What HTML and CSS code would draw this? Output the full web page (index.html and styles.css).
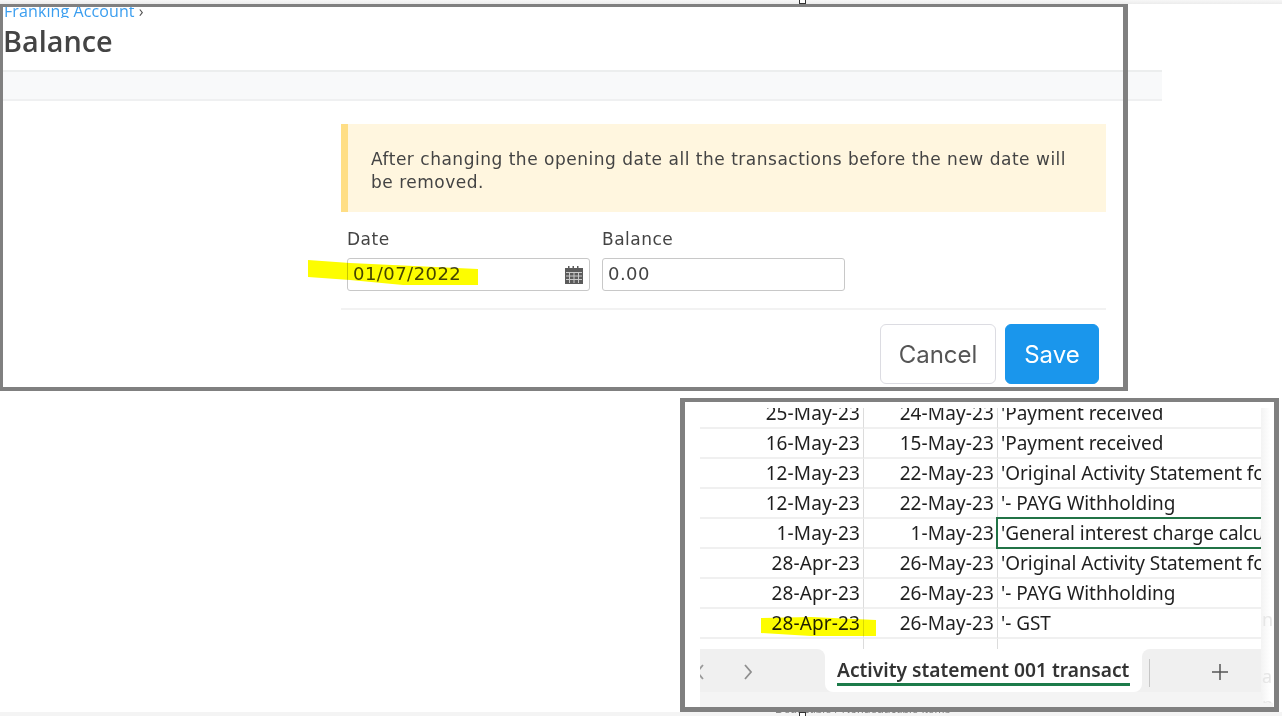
FILE: index.html
```html
<!DOCTYPE html>
<html lang="en">
<head>
<meta charset="utf-8">
<title>Balance</title>
<link rel="stylesheet" href="styles.css">
</head>
<body>
<div class="top-strip"></div>
<div class="marker marker-top"></div>
<div class="bottom-strip"><span class="bottom-dots">···</span><span class="bottom-text">Deductible / Nondeductible items</span></div>
<div class="marker marker-bottom"></div>

<section class="window window-form">
  <div class="crumb"><a class="crumb-link">Franking Account</a> ›</div>
  <h1 class="title">Balance</h1>
  <div class="band"></div>
  <div class="form">
    <div class="alert">After changing the opening date all the transactions before the new date will be removed.</div>
    <div class="fields">
      <div class="field">
        <label class="label">Date</label>
        <div class="input">
          <span>01/07/2022</span>
          <svg class="cal" width="18" height="19" viewBox="0 0 18 19" aria-hidden="true">
            <path fill="#5b5b5b" d="M0 3h3V1h1.500v2h3V1h1.500v2h3V1h1.500v2H18v16H0z"/>
            <path stroke="#c9c9c9" stroke-width="1" fill="none" d="M1 7.500h16M1 11h16M1 14.500h16M4.500 7v11M9 7v11M13.500 7v11"/>
          </svg>
        </div>
      </div>
      <div class="field">
        <label class="label">Balance</label>
        <div class="input"><span>0.00</span></div>
      </div>
    </div>
    <div class="actions">
      <button class="btn btn-cancel">Cancel</button>
      <button class="btn btn-save">Save</button>
    </div>
  </div>
</section>

<svg class="highlight highlight-date" width="172" height="28" viewBox="0 0 172 28" aria-hidden="true">
  <polygon fill="#fdfd00" points="0,0 42,3 170,9 170,25 95,25 42,20 0,17"/>
</svg>

<section class="window window-sheet">
  <div class="sheet">
    <div class="grid">
      <div class="cell num">25-May-23</div><div class="cell num">24-May-23</div><div class="cell txt">'Payment received</div>
      <div class="cell num">16-May-23</div><div class="cell num">15-May-23</div><div class="cell txt">'Payment received</div>
      <div class="cell num">12-May-23</div><div class="cell num">22-May-23</div><div class="cell txt">'Original Activity Statement for the period</div>
      <div class="cell num">12-May-23</div><div class="cell num">22-May-23</div><div class="cell txt">'- PAYG Withholding</div>
      <div class="cell num">1-May-23</div><div class="cell num">1-May-23</div><div class="cell txt selected">'General interest charge calculation</div>
      <div class="cell num">28-Apr-23</div><div class="cell num">26-May-23</div><div class="cell txt">'Original Activity Statement for the period</div>
      <div class="cell num">28-Apr-23</div><div class="cell num">26-May-23</div><div class="cell txt">'- PAYG Withholding</div>
      <div class="cell num">28-Apr-23</div><div class="cell num">26-May-23</div><div class="cell txt">'- GST</div>
      <div class="cell empty"></div><div class="cell empty"></div><div class="cell empty"></div>
    </div>
  </div>
  <div class="tabbar">
    <div class="tab-side tab-side-left">
      <svg class="chev chev-left" width="10" height="18" viewBox="0 0 10 18" aria-hidden="true"><path d="M8 2 2 9l6 7" fill="none" stroke="#9a9a9a" stroke-width="1.800"/></svg>
      <svg class="chev chev-right" width="10" height="18" viewBox="0 0 10 18" aria-hidden="true"><path d="M2 2l6 7-6 7" fill="none" stroke="#8f8f8f" stroke-width="1.800"/></svg>
    </div>
    <div class="tab-slot"><div class="tab"><span class="tab-label">Activity statement 001 transact</span></div></div>
    <div class="tab-side tab-side-right">
      <span class="tab-divider"></span>
      <svg class="plus" width="18" height="18" viewBox="0 0 18 18" aria-hidden="true"><path d="M9 1v16M1 9h16" stroke="#555" stroke-width="1.500" fill="none"/></svg>
    </div>
  </div>
  <div class="statusbar"></div>
  <div class="edge">
    <span class="ghost ghost-a">nt</span>
    <span class="ghost ghost-b">a</span>
    <span class="ghost ghost-c">nt</span>
  </div>
</section>

<svg class="highlight highlight-apr" width="116" height="20" viewBox="0 0 116 20" aria-hidden="true">
  <polygon fill="#fdfd00" points="0,1 50,0 115,3 115,19 50,19 0,16"/>
</svg>
</body>
</html>
```
FILE: styles.css
```css
* { box-sizing: border-box; }
html, body { margin: 0; padding: 0; }
body {
  position: relative;
  width: 1282px;
  height: 716px;
  overflow: hidden;
  background: #fff;
}
.top-strip {
  position: absolute; left: 0; top: 0; width: 1282px; height: 4px;
  background: linear-gradient(#f7f7f7, #ececec);
}
.bottom-strip {
  position: absolute; left: 0; top: 712px; width: 1282px; height: 4px;
  background: #f4f4f4; overflow: hidden;
}
.bottom-text, .bottom-dots {
  position: absolute; top: -10px;
  font: 12px "Liberation Sans", sans-serif; color: #888;
}
.bottom-text { left: 775px; }
.bottom-dots { left: 703px; letter-spacing: 2px; }
.marker {
  position: absolute; left: 799px; width: 7px; height: 5px;
  border: 1px solid #333; background: #fff;
}
.marker-top { top: -1px; }
.marker-bottom { top: 712px; }

.window { position: absolute; border-style: solid; border-color: #808080; }

/* Form window */
.window-form {
  left: 0; top: 4px; width: 1128px; height: 387px;
  border-width: 3px 5px 4px 3px;
  font-family: "DejaVu Sans", sans-serif;
}
.crumb {
  height: 11px; padding-left: 1px; overflow: hidden;
  font: 16px/9px "Open Sans", sans-serif; color: #555;
  letter-spacing: .1px;
}
.crumb-link { color: #3b9eef; }
.title {
  margin: 5px 0 0; height: 47px;
  font: 600 28.800px/36px "Open Sans", sans-serif; color: #444;
}
.band {
  position: relative; z-index: -1;
  width: 1159px; height: 31px;
  background: #f8f9fa;
  border-top: 2px solid #eceeee;
  border-bottom: 2px solid #eff0f1;
}
.form { width: 765px; margin: 23px 0 0 338px; }
.alert {
  height: 88px; padding: 24px 30px 0 23px;
  background: #fff6df; border-left: 7px solid #ffde85;
  font-size: 17px; line-height: 23px; color: #444;
  letter-spacing: .51px;
}
.fields { display: flex; gap: 12px; padding: 15px 0 0 6px; }
.field { width: 243px; }
.label { display: block; height: 31px; font-size: 17px; line-height: 24px; color: #444; letter-spacing: .5px; }
.input {
  display: flex; align-items: center; justify-content: space-between;
  height: 33px; padding: 0 6px 2px 5px;
  border: 1px solid #c8c8c8; border-radius: 3px;
  font-size: 18px; color: #444; letter-spacing: .45px;
}
.cal { flex: none; margin-top: 2px; }
.actions {
  display: flex; justify-content: flex-end; gap: 9px;
  margin-top: 17px; padding: 14px 7px 0 0;
  border-top: 2px solid #f2f2f2;
}
.btn { height: 60px; border-radius: 6px; font: 24px Inter, sans-serif; }
.btn-cancel { width: 116px; background: #fff; border: 1px solid #dcdce2; color: #555; }
.btn-save { width: 94px; background: #1a96ec; border: 1px solid #1a96ec; color: #fff; }

.highlight { position: absolute; mix-blend-mode: multiply; }
.highlight-date { left: 308px; top: 260px; }
.highlight-apr { left: 761px; top: 617px; }

/* Spreadsheet window */
.window-sheet {
  left: 680px; top: 398px; width: 599px; height: 314px;
  border-width: 4px 5px 5px 5px;
  font-family: "Noto Sans", sans-serif;
}
.sheet { margin: 6px 0 0 15px; width: 561px; height: 241px; overflow: hidden; }
.grid {
  display: grid; grid-template-columns: 164px 134px 263px;
  grid-auto-rows: 30px; margin-top: -9px;
}
.cell {
  white-space: nowrap; overflow: hidden;
  font-size: 19px; line-height: 28px; color: #1f1f1f;
  border-right: 1px solid #dcdcdc; border-bottom: 2px solid #f0f0f0;
}
.num { text-align: right; padding-right: 3px; letter-spacing: .12px; }
.txt { padding-left: 3px; border-right: 0; letter-spacing: -.05px; }
.selected {
  position: relative; height: 32px; margin: -2px -3px 0 -2px; padding-left: 5px;
  line-height: 32px; border: 0; box-shadow: inset 0 0 0 2px #217346;
}
.empty { border-bottom: 0; }
.empty:last-child { border-right: 0; }

.tabbar {
  display: flex; margin-left: 15px; width: 561px; height: 43px; overflow: hidden;
}
.tab-side { position: relative; background: #f0f0f0; }
.tab-side-left { width: 125px; border-radius: 0 8px 0 0; }
.tab-side-right { flex: 1; border-radius: 8px 0 0 0; }
.chev { position: absolute; top: 14px; }
.chev-left { left: -5px; }
.chev-right { left: 43px; }
.tab-slot { width: 317px; background: #f0f0f0; }
.tab {
  height: 43px; padding: 9px 12px 0;
  background: #fff; border-radius: 0 0 8px 8px;
}
.tab-label {
  display: block; height: 28px; white-space: nowrap; overflow: hidden;
  font-size: 19.200px; font-weight: 600; line-height: 24px; color: #333;
  border-bottom: 3px solid #1d7b4a;
}
.tab-divider { position: absolute; left: 7px; top: 10px; width: 1px; height: 28px; background: #c6c6c6; }
.plus { position: absolute; left: 69px; top: 14px; }
.statusbar { margin-left: 15px; width: 573px; height: 15px; background: #f4f4f4; }
.edge {
  position: absolute; left: 576px; top: 6px; width: 12px; height: 295px; overflow: hidden;
  background: linear-gradient(to right, #f3f3f3, #fff 80%);
}
.ghost { position: absolute; left: 1px; font-size: 18px; color: #e6e6e6; }
.ghost-a { top: 199px; }
.ghost-b { top: 256px; }
.ghost-c { top: 284px; }
```
